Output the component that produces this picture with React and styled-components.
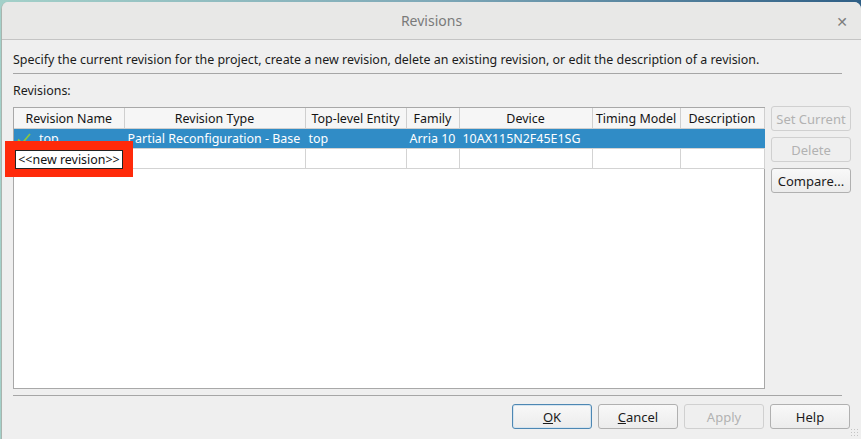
import React from "react";
import styled, { createGlobalStyle } from "styled-components";

const Global = createGlobalStyle`
  html, body {
    margin: 0;
    padding: 0;
    width: 861px;
    height: 439px;
    overflow: hidden;
    background: linear-gradient(to right, #a3d0c9 0%, #7fa9b8 50%, #2f5f86 100%);
    font-family: "Noto Sans", "DejaVu Sans", sans-serif;
    font-size: 12.45px;
    color: #1b1b1b;
  }
`;

const Window = styled.div`
  margin: 2px 0 0 1px;
  height: 437px;
  background: #efefef;
  border-radius: 7px 7px 0 0;
  border-left: 1px solid #a9b4ae;
  display: flex;
  flex-direction: column;
  position: relative;
  overflow: hidden;
`;

const TitleBar = styled.div`
  height: 37px;
  flex: none;
  background: #e8e8e7;
  border-bottom: 1px solid #c4c4c4;
  display: flex;
  align-items: center;
  justify-content: center;
  position: relative;
  font-size: 14px;
  color: #7a7a7a;
`;

const Close = styled.span`
  position: absolute;
  right: 13px;
  top: 10px;
  font-size: 14px;
  color: #7d7d7d;
  font-weight: bold;
`;

const Body = styled.div`
  flex: 1;
  display: flex;
  flex-direction: column;
  padding: 0 11px 0 11px;
`;

const Intro = styled.div`
  margin-top: 11px;
  height: 18px;
  line-height: 18px;
`;

const Rule = styled.div`
  height: 1px;
  background: #a6a6a6;
  margin: ${(p) => p.$top}px 8px 0 0;
`;

const Label = styled.div`
  margin-top: 8px;
  height: 18px;
  line-height: 18px;
`;

const Main = styled.div`
  margin-top: 7px;
  display: flex;
  gap: 6px;
  height: 282px;
`;

const TableFrame = styled.div`
  width: 750px;
  border: 1px solid #a8a8a8;
  background: #fff;
  position: relative;
`;

const Table = styled.table`
  border-collapse: collapse;
  table-layout: fixed;
  width: 750px;
  font-size: 12.45px;
`;

const Th = styled.th`
  font-weight: normal;
  height: 20px;
  padding: 0 2px;
  background: #f6f6f6;
  border-right: 1px solid #cfcfcf;
  border-bottom: 1px solid #cfcfcf;
  white-space: nowrap;
  overflow: hidden;
  color: #141414;
`;

const Td = styled.td`
  height: 19px;
  padding: 0 3px;
  white-space: nowrap;
  overflow: hidden;
  border-right: 1px solid ${(p) => (p.$sel ? "#308cc6" : "#d3d3d3")};
  border-bottom: 1px solid #d3d3d3;
  background: ${(p) => (p.$sel ? "#308cc6" : "#fff")};
  color: ${(p) => (p.$sel ? "#fff" : "#1b1b1b")};
`;

const Tick = styled.svg`
  vertical-align: -2px;
  margin: 0 8px 0 0;
`;

const Highlight = styled.div`
  position: absolute;
  left: -9px;
  top: 33px;
  width: 128px;
  height: 36px;
  background: #ff2a0a;
  display: flex;
  align-items: center;
  justify-content: center;
`;

const NewRev = styled.span`
  background: #fff;
  border: 1px solid #222;
  padding: 0 2px;
  height: 17px;
  line-height: 17px;
  color: #111;
`;

const Side = styled.div`
  display: flex;
  flex-direction: column;
  gap: 6px;
  margin-top: -1px;
`;

const Button = styled.button`
  width: 80px;
  height: 25px;
  font-family: inherit;
  font-size: 13px;
  border-radius: 3px;
  border: 1px solid ${(p) => (p.$default ? "#4d87b3" : p.disabled ? "#d0d0d0" : "#b0b0b0")};
  background: ${(p) =>
    p.disabled ? "#efefef" : "linear-gradient(#f8f8f8, #ececec)"};
  color: ${(p) => (p.disabled ? "#b2b2b2" : "#1b1b1b")};
  box-shadow: ${(p) => (p.$default ? "inset 0 0 0 1px #d5e4ef" : "none")};
  padding: 0;
`;

const Footer = styled.div`
  display: flex;
  justify-content: flex-end;
  gap: 6px;
  margin-top: 8px;
`;

const Grip = styled.div`
  position: absolute;
  right: 2px;
  bottom: 2px;
  width: 9px;
  height: 9px;
  background-image: radial-gradient(#c4c4c4 0.8px, transparent 1px);
  background-size: 3px 3px;
`;

const cols = [
  ["Revision Name", 110],
  ["Revision Type", 181],
  ["Top-level Entity", 101],
  ["Family", 53],
  ["Device", 133],
  ["Timing Model", 88],
  ["Description", 84],
];

const row = ["top", "Partial Reconfiguration - Base", "top", "Arria 10", "10AX115N2F45E1SG", "", ""];

const App = () => (
  <>
    <Global />
    <Window>
      <TitleBar>
        Revisions
        <Close>✕</Close>
      </TitleBar>
      <Body>
        <Intro>
          Specify the current revision for the project, create a new revision, delete an existing revision, or edit the description of a revision.
        </Intro>
        <Rule $top={4} />
        <Label>Revisions:</Label>
        <Main>
          <TableFrame>
            <Table>
              <colgroup>
                {cols.map(([n, w]) => (
                  <col key={n} style={{ width: w }} />
                ))}
              </colgroup>
              <thead>
                <tr>
                  {cols.map(([n]) => (
                    <Th key={n}>{n}</Th>
                  ))}
                </tr>
              </thead>
              <tbody>
                <tr>
                  {row.map((v, i) => (
                    <Td key={i} $sel>
                      {i === 0 && (
                        <Tick width="14" height="12" viewBox="0 0 14 12">
                          <path d="M1 6.5 L5 10.5 L13 1" fill="none" stroke="#8cc63f" strokeWidth="1.8" />
                        </Tick>
                      )}
                      {v}
                    </Td>
                  ))}
                </tr>
                <tr>
                  {row.map((_, i) => (
                    <Td key={i}>&nbsp;</Td>
                  ))}
                </tr>
              </tbody>
            </Table>
            <Highlight>
              <NewRev>&lt;&lt;new revision&gt;&gt;</NewRev>
            </Highlight>
          </TableFrame>
          <Side>
            <Button disabled>Set Current</Button>
            <Button disabled>Delete</Button>
            <Button>Compare...</Button>
          </Side>
        </Main>
        <Rule $top={6} />
        <Footer>
          <Button $default>
            <u>O</u>K
          </Button>
          <Button>
            <u>C</u>ancel
          </Button>
          <Button disabled>Apply</Button>
          <Button>Help</Button>
        </Footer>
      </Body>
      <Grip />
    </Window>
  </>
);

export default App;
